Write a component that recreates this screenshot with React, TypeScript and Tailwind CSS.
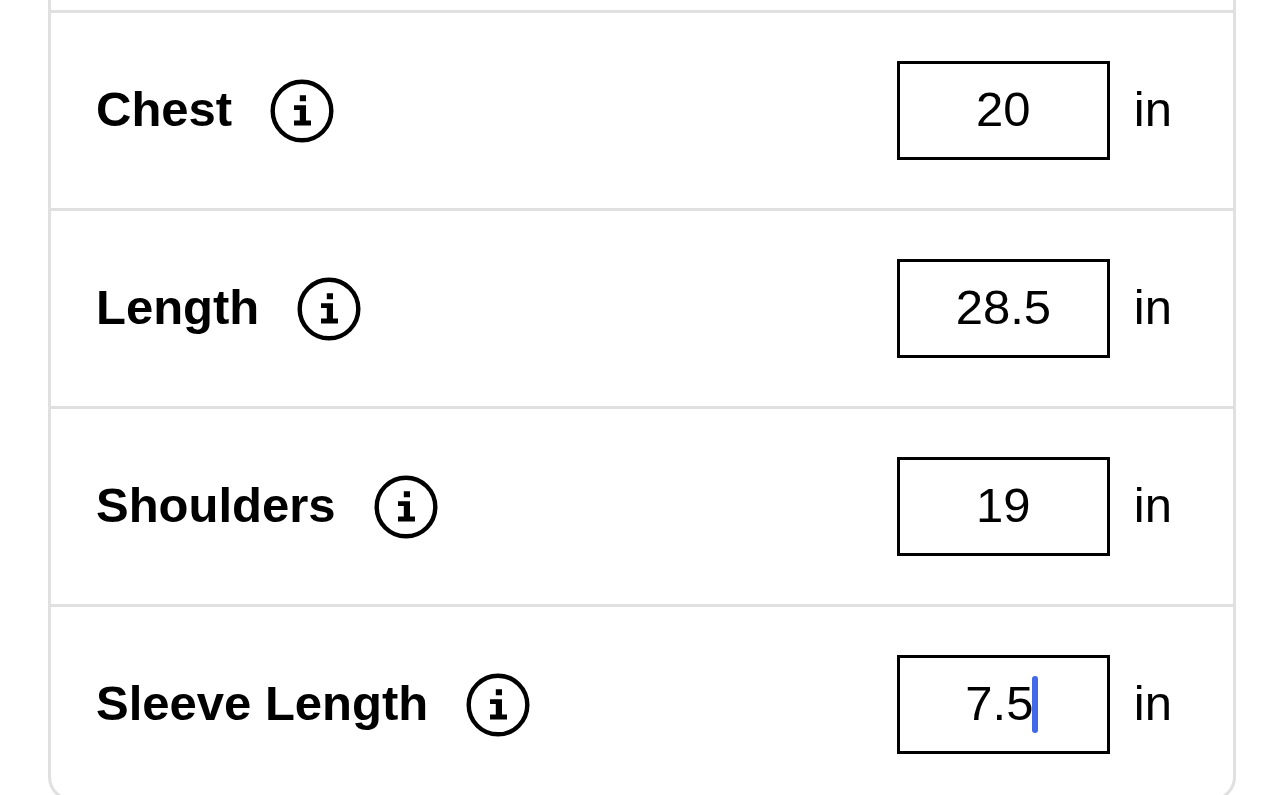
import { useState } from "react";
import clsx from "clsx";

const measurements = [
  { id: "chest", label: "Chest", value: "20" },
  { id: "length", label: "Length", value: "28.5" },
  { id: "shoulders", label: "Shoulders", value: "19" },
  { id: "sleeve", label: "Sleeve Length", value: "7.5", active: true },
];

function InfoIcon() {
  return (
    <svg viewBox="0 0 64 64" className="size-16" aria-hidden="true">
      <circle cx="32" cy="32" r="29.3" fill="none" stroke="currentColor" strokeWidth="4.4" />
      <path d="M29.8 16.2h6.2v6h-6.2zM24 26.2h12v15.2h5v5H24v-5h5.8V31H24z" fill="currentColor" />
    </svg>
  );
}

type RowProps = { id: string; label: string; value: string; active?: boolean };

function MeasurementRow({ id, label, value, active }: RowProps) {
  const [text, setText] = useState(value);

  return (
    <div className="flex items-center justify-between border-t-[3px] border-[#e0e0e0] py-12 pl-[45px] pr-[61px] last:pb-11">
      <div className="flex items-center gap-[38px]">
        <label htmlFor={id} className="pb-0.5 font-bold">{label}</label>
        <button type="button" aria-label={`About ${label}`}>
          <InfoIcon />
        </button>
      </div>
      <div className="flex items-center gap-6">
        <div className="relative">
          <input
            id={id}
            inputMode="decimal"
            value={text}
            onChange={(e) => setText(e.target.value)}
            className={clsx(
              "block h-[99px] w-[213px] border-[3px] border-black bg-white pb-1 text-center caret-transparent outline-none",
              active && "pr-2",
            )}
          />
          {active && <span className="absolute left-[135px] top-[21px] h-[57px] w-1.5 rounded-full bg-[#4169e8]" />}
        </div>
        <span className="pb-0.5">in</span>
      </div>
    </div>
  );
}

export default function App() {
  return (
    <main className="max-h-screen overflow-hidden bg-white px-12 font-['Liberation_Sans',Arial,sans-serif] text-[49px] leading-none text-black">
      <section className="rounded-b-3xl border-x-[3px] border-b-[3px] border-[#e0e0e0] pt-2.5">
        {measurements.map((m) => (
          <MeasurementRow key={m.id} {...m} />
        ))}
      </section>
    </main>
  );
}
